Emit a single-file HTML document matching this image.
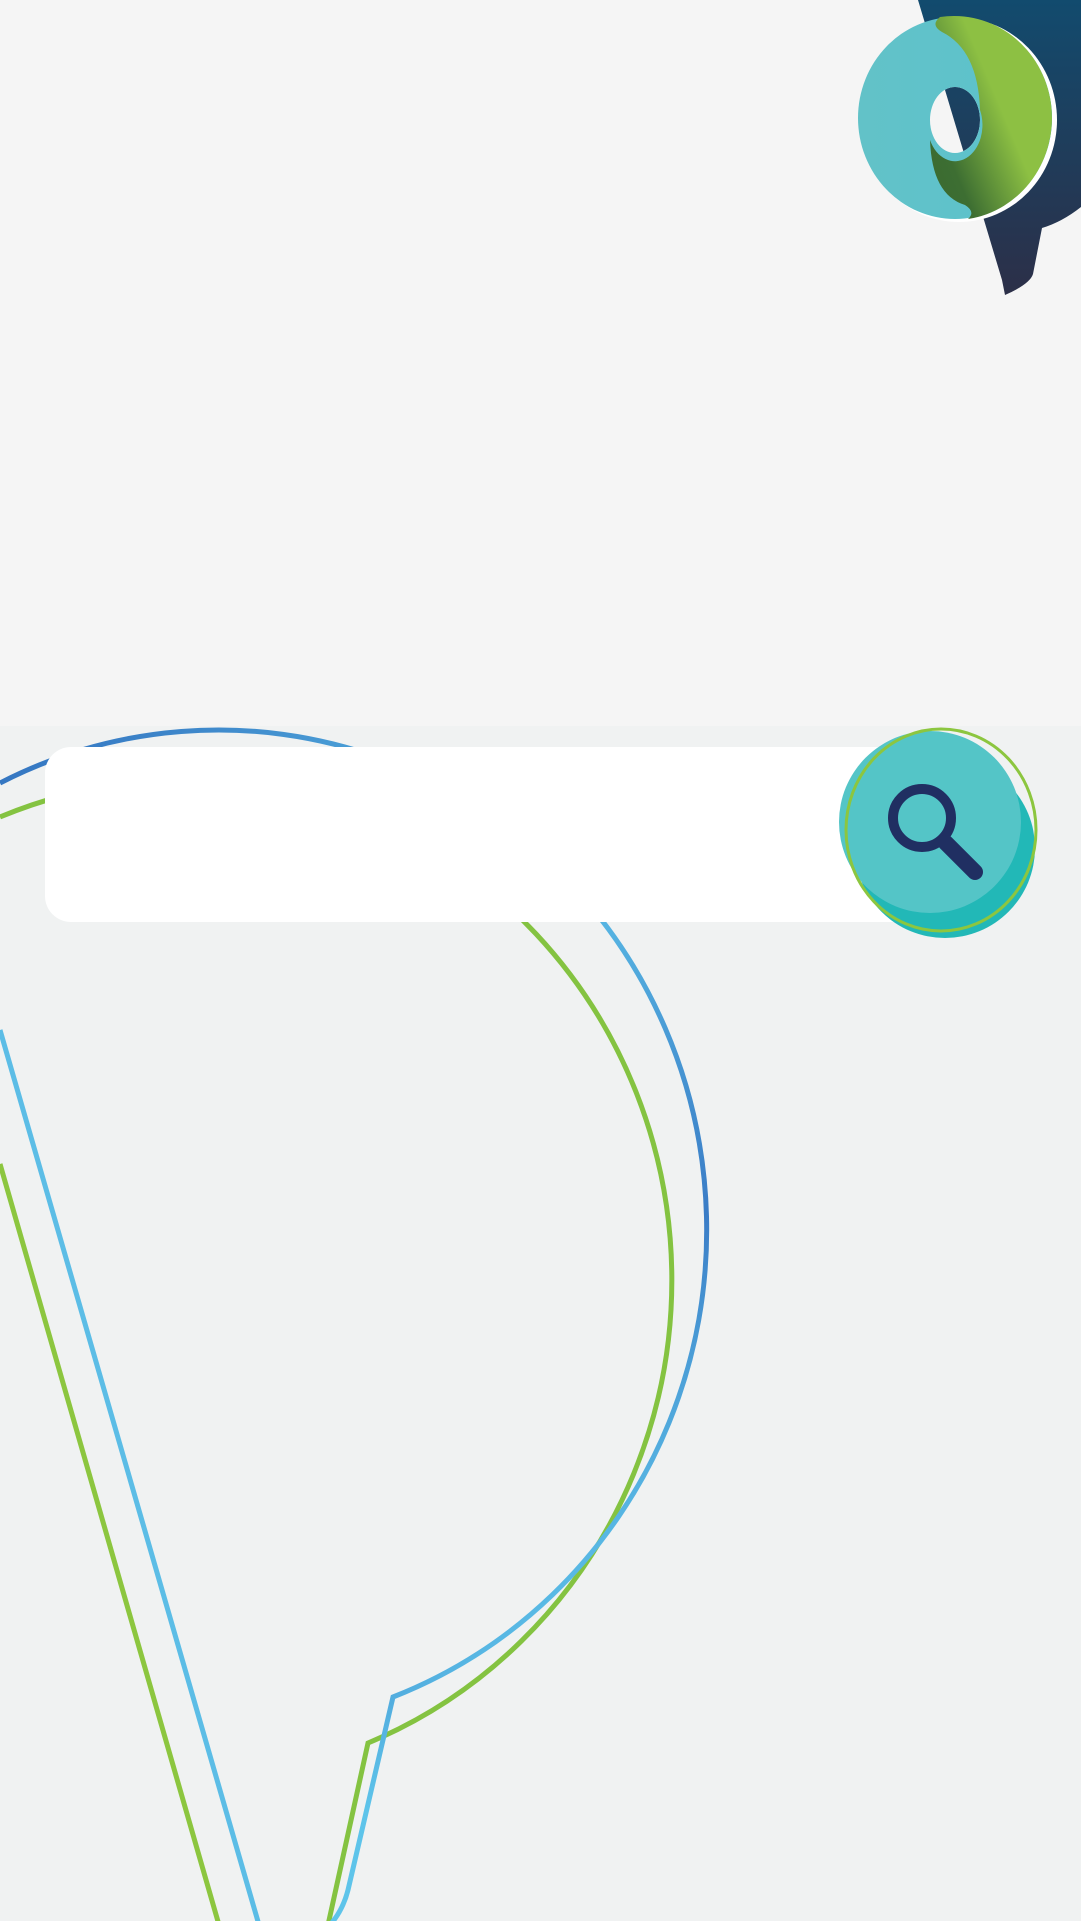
<!DOCTYPE html>
<html><head><meta charset="utf-8">
<style>
html,body{margin:0;padding:0;}
body{width:1081px;height:1921px;position:relative;overflow:hidden;background:#f0f2f2;font-family:"Liberation Sans",sans-serif;}
.top{position:absolute;left:0;top:0;width:1081px;height:726px;background:#f5f5f5;}
.box{position:absolute;left:45px;top:747px;width:880px;height:175px;background:#fff;border-radius:26px 0 0 26px;}
svg{position:absolute;left:0;top:0;}
</style></head><body>
<div class="top"></div>
<svg width="1081" height="1921" viewBox="0 0 1081 1921">
<defs>
<linearGradient id="bl" gradientUnits="userSpaceOnUse" x1="0" y1="750" x2="700" y2="1500">
<stop offset="0" stop-color="#3373c0"/><stop offset="0.45" stop-color="#5ec4ea"/><stop offset="0.8" stop-color="#3a7cc6"/><stop offset="1" stop-color="#5ec4ea"/>
</linearGradient>
<linearGradient id="dk" x1="0" y1="0" x2="0" y2="1">
<stop offset="0" stop-color="#124b6e"/><stop offset="1" stop-color="#2c2f48"/>
</linearGradient>
<linearGradient id="tl" x1="0" y1="0" x2="1" y2="0">
<stop offset="0" stop-color="#62c2c8"/><stop offset="0.65" stop-color="#5ec2cb"/><stop offset="1" stop-color="#1a9bc4"/>
</linearGradient>
<linearGradient id="gn" x1="1" y1="0.2" x2="0" y2="0.9">
<stop offset="0" stop-color="#8dc043"/><stop offset="0.4" stop-color="#8dc043"/><stop offset="0.8" stop-color="#3d6e32"/><stop offset="1" stop-color="#3a6a30"/>
</linearGradient>
<clipPath id="hole"><path d="M850 0 H1081 V240 H850 Z M930 120 A25 33 0 1 0 980 120 A25 33 0 1 0 930 120 Z" clip-rule="evenodd"/></clipPath>
</defs>
<path d="M918 0 L1081 0 L1081 207 Q1062 222 1042 228 L1033 274 Q1030 284 1005 295 L1002 280 Z" fill="url(#dk)"/>
<g clip-path="url(#hole)">
<ellipse cx="959" cy="120" rx="98" ry="102" fill="#fff"/>
<ellipse cx="955" cy="118" rx="97" ry="101" fill="url(#tl)"/>
<path d="M940 17 Q930 25 942 32 Q978 50 980 110 A25 33 0 0 1 930 140 Q932 195 965 205 Q976 212 968 219 A97 101 0 0 0 940 17 Z" fill="url(#gn)"/>
</g>
<g fill="none" stroke-width="5">
<path d="M0 817 A484 496 0 1 1 368 1743 L328 1925" stroke="#84c341"/>
<path d="M0 1164 L219 1925" stroke="#8cc63f"/>
<path d="M0 783 A488 500 0 1 1 393 1697 L348 1890 Q343 1910 330 1925" stroke="url(#bl)"/>
<path d="M0 1030 L259 1925" stroke="#5cbde6"/>
</g>
</svg>
<div class="box"></div>
<svg width="1081" height="1921" viewBox="0 0 1081 1921">
<circle cx="945" cy="848" r="90" fill="#22b8b7"/>
<circle cx="930" cy="822" r="91" fill="#54c5c7"/>
<ellipse cx="941" cy="830" rx="95" ry="101" fill="none" stroke="#8cc63f" stroke-width="3"/>
<circle cx="922" cy="818" r="29" fill="none" stroke="#202f62" stroke-width="10"/>
<line x1="946" y1="843" x2="975" y2="872" stroke="#202f62" stroke-width="16" stroke-linecap="round"/>
</svg>
</body></html>
